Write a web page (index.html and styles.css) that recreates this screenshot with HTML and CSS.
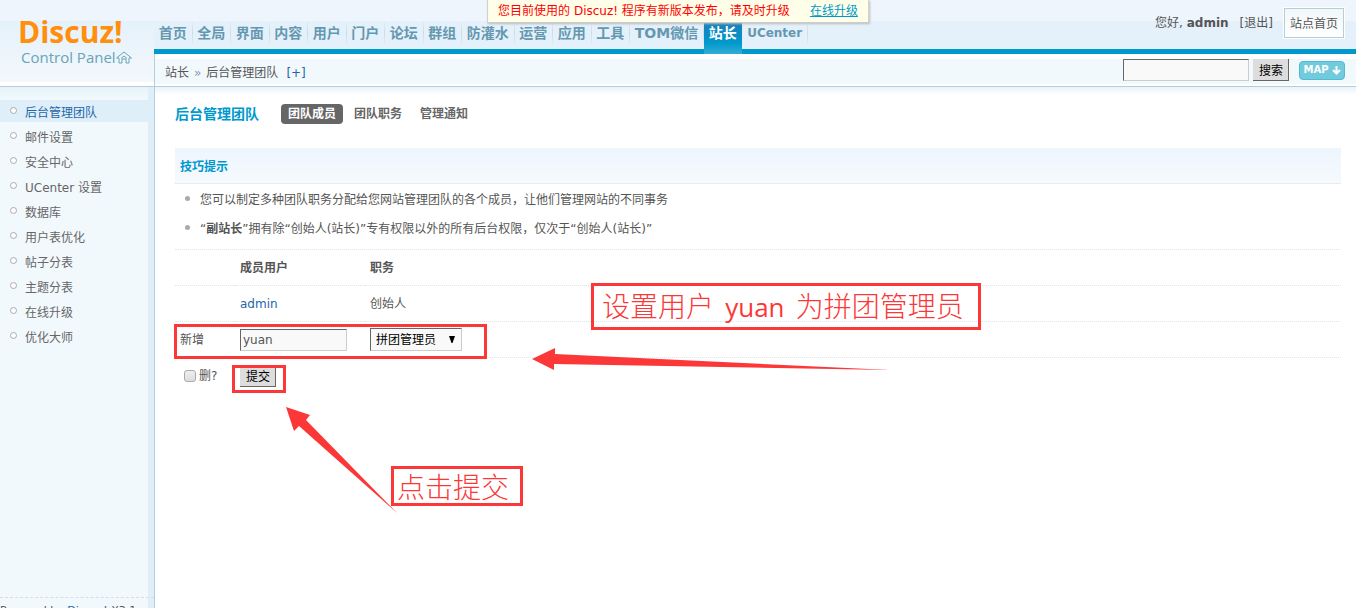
FILE: index.html
```html
<!DOCTYPE html>
<html lang="zh-CN">
<head>
<meta charset="utf-8">
<title>Discuz! Control Panel</title>
<link rel="stylesheet" href="styles.css">
</head>
<body>
<header class="header">
  <div class="brand">
    <div class="brand-name">Discuz!</div>
    <div class="brand-sub">Control Panel<svg class="home" width="16" height="13" viewBox="0 0 16 13" fill="none" stroke="#6ba3b8" stroke-width="1"><path d="M.5 7 8 1l7.500 6h-2.500v5h-3V8H6v4H3V7zM5 7.500 8 5l3 2.500"/></svg></div>
  </div>
  <div class="head-main">
    <div class="topbar">
      <nav class="nav">
        <a href="#">首页</a><a href="#">全局</a><a href="#">界面</a><a href="#">内容</a><a href="#">用户</a><a href="#">门户</a><a href="#">论坛</a><a href="#">群组</a><a href="#">防灌水</a><a href="#">运营</a><a href="#">应用</a><a href="#">工具</a><a href="#">TOM微信</a><a href="#" class="current">站长</a><a href="#" class="latin">UCenter</a>
      </nav>
      <div class="user">
        <span>您好, <strong>admin</strong></span>
        <a href="#">[退出]</a>
        <a href="#" class="site-home">站点首页</a>
      </div>
    </div>
    <div class="crumbs">
      <div class="path"><span>站长</span><span class="sep">»</span><span>后台管理团队</span><a href="#">[+]</a></div>
      <form class="search">
        <input class="field" type="text" aria-label="搜索">
        <button class="btn" type="button">搜索</button>
        <a href="#" class="map">MAP<svg width="9" height="9" viewBox="0 0 9 9" fill="none" stroke="#fff" stroke-width="2"><path d="M4.500 0v7M1 4l3.500 3.500L8 4"/></svg></a>
      </form>
    </div>
  </div>
</header>

<div class="body">
  <aside class="sidebar">
    <ul class="menu">
      <li class="active"><a href="#">后台管理团队</a></li>
      <li><a href="#">邮件设置</a></li>
      <li><a href="#">安全中心</a></li>
      <li><a href="#">UCenter 设置</a></li>
      <li><a href="#">数据库</a></li>
      <li><a href="#">用户表优化</a></li>
      <li><a href="#">帖子分表</a></li>
      <li><a href="#">主题分表</a></li>
      <li><a href="#">在线升级</a></li>
      <li><a href="#">优化大师</a></li>
    </ul>
    <div class="powered">Powered by <a href="#">Discuz!</a> X3.1</div>
  </aside>
  <main class="content">
    <div class="title-row">
      <h1>后台管理团队</h1>
      <div class="tabs"><a href="#" class="on">团队成员</a><a href="#">团队职务</a><a href="#">管理通知</a></div>
    </div>
    <h2 class="tips-title">技巧提示</h2>
    <ul class="tips">
      <li>您可以制定多种团队职务分配给您网站管理团队的各个成员，让他们管理网站的不同事务</li>
      <li><q><strong>副站长</strong></q>拥有除<q>创始人(站长)</q>专有权限以外的所有后台权限，仅次于<q>创始人(站长)</q></li>
    </ul>
    <table class="members">
      <thead><tr><th class="c-op"></th><th class="c-user">成员用户</th><th>职务</th></tr></thead>
      <tbody>
        <tr><td></td><td><a href="#">admin</a></td><td>创始人</td></tr>
        <tr><td>新增</td><td><input class="field name" type="text" value="yuan" aria-label="成员用户"></td>
          <td><span class="picker"><select aria-label="职务"><option>拼团管理员</option></select><svg width="6" height="7" viewBox="0 0 6 7"><path d="M0 0h6L3.500 7h-1z"/></svg></span></td></tr>
        <tr class="last"><td><label class="del"><input type="checkbox">删?</label></td><td colspan="2"><button class="btn" type="button">提交</button></td></tr>
      </tbody>
    </table>
  </main>
</div>

<div class="notice">您目前使用的 Discuz! 程序有新版本发布，请及时升级<a href="#">在线升级</a></div>

<div class="mark mark-row"></div>
<div class="mark mark-submit"></div>
<div class="mark note-user">设置用户 <span>yuan</span> 为拼团管理员</div>
<div class="mark note-submit">点击提交</div>
<svg class="arrows" width="660" height="170" viewBox="240 350 660 170" fill="#fc3737"><path d="M532 359 555 348v6L890 370 554 364v6zM286 407 310 415 306 420 397 513 299 426 294 431z"/></svg>
</body>
</html>
```

FILE: styles.css
```css
*, *::before { box-sizing: border-box; }
body {
  margin: 0;
  height: 100vh;
  overflow: hidden;
  display: flex;
  flex-direction: column;
  position: relative;
  background: #fff;
  color: #555;
  font: 12px/18px "DejaVu Sans", "Noto Sans CJK SC", sans-serif;
}
a { color: inherit; text-decoration: none; }
ul { list-style: none; margin: 0; padding: 0; }
h1, h2 { margin: 0; color: #09c; }
input, button, select { font: inherit; margin: 0; }

.header { display: flex; height: 87px; border-bottom: 1px solid #b5cfd9; flex: none; }
.brand {
  width: 154px;
  padding: 16px 0 0 18px;
  border-bottom: 4px solid #fff;
  background: linear-gradient(#eef5fc 21px, #e5f1fa 21px, #f3f8fd);
  font-family: "Open Sans", sans-serif;
}
.brand-name { color: #ff8f0c; font-size: 30px; font-weight: 700; line-height: 31px; }
.brand-sub { color: #6ba3b8; font-size: 15px; line-height: 20px; padding-left: 3px; display: flex; align-items: center; white-space: nowrap; }
.head-main { flex: 1; display: flex; flex-direction: column; }
.topbar {
  height: 54px;
  border-bottom: 5px solid #09c;
  background: linear-gradient(#eef5fc 21px, #e4f0fa 21px, #e4f0fa);
  display: flex;
  justify-content: space-between;
}
.nav { display: flex; width: 654px; height: 33px; margin-top: 21px; color: #6498b0; font-size: 14px; font-weight: 700; }
.nav a { flex: 1 0 auto; height: 24px; line-height: 24px; text-align: center; border-right: 1px solid; border-image: linear-gradient(#e4f0fa, #c8dce8, #e4f0fa) 1; }
.nav .current { height: 33px; color: #fff; border-right-color: transparent; border-image: none; background: linear-gradient(#1a7db8, #09c 22px, #33add6); }
.nav .latin { font-size: 12px; }
.user { display: flex; align-items: center; gap: 11px; height: 45px; padding-right: 12px; }
.user > span, .user > a { padding-top: 1px; }
.user .site-home { padding: 6px 5px 4px; line-height: 18px; border: 1px solid #b5cfd9; outline: 1px solid #fff; background: linear-gradient(#f2f7fa, #fff); }

.crumbs {
  flex: 1;
  display: flex;
  justify-content: space-between;
  align-items: center;
  padding: 0 11px 0 10px;
  border-left: 1px solid #b5cfd9;
  background: linear-gradient(#fff 5px, #f2f9fd 5px, #f2f9fd 30px, #fff 30px);
}
.path { display: flex; padding-top: 5px; }
.path .sep { margin: 0 5px; color: #889ab0; }
.path a { margin-left: 8px; color: #2366a8; }
.search { display: flex; align-items: center; gap: 4px; }
.field { width: 126px; height: 22px; padding: 2px; border: 1px solid; border-color: #666 #ccc #ccc #666; background: #f9f9f9; color: #555; }
.btn { height: 22px; padding: 2px 5px 0 6px; line-height: 18px; border: 0; border-right: 1px solid #666; border-bottom: 1px solid #666; background: #ddd; color: #000; }
.map { display: flex; align-items: center; justify-content: center; gap: 3px; width: 46px; height: 19px; margin-left: 6px; border: 1px solid #4fbbd4; border-radius: 4px; background: #72cadd; color: #fff; font-size: 10px; font-weight: 700; }

.body { flex: 1; display: flex; min-height: 0; }
.sidebar {
  width: 155px;
  flex: none;
  display: flex;
  flex-direction: column;
  justify-content: space-between;
  border-right: 1px solid #b5cfd9;
  background: linear-gradient(90deg, transparent 148px, #deeffa 148px), linear-gradient(#e6f3fa, #f2f9fd 13px);
}
.menu { padding-top: 13px; color: #666; }
.menu li { height: 22px; margin-bottom: 3px; line-height: 26px; padding-left: 10px; display: flex; gap: 8px; }
.menu li::before { content: ""; width: 7px; height: 7px; margin-top: 7px; border: 1px solid #aaa; border-radius: 50%; background: #fff; }
.menu .active { background: #deeffa; color: #2366a8; }
.powered { height: 11px; border-top: 1px dashed #d8dde2; padding-top: 4px; font-size: 11px; line-height: 18px; white-space: nowrap; }
.powered a { color: #2366a8; }

.content { flex: 1; padding: 17px 15px 0 20px; background: linear-gradient(#e8f3fc, #fff 8px); }
.title-row { display: flex; align-items: center; height: 20px; margin-bottom: 24px; }
h1 { font-size: 14px; line-height: 20px; }
.tabs { display: flex; gap: 4px; margin-left: 22px; color: #666; font-weight: 700; }
.tabs a { padding: 1px 7px 0; line-height: 19px; border-radius: 4px; }
.tips-title { height: 36px; padding: 1px 0 0 5px; font-size: 12px; line-height: 36px; border-bottom: 1px dotted #dbe6ee; background: linear-gradient(#edf5fd, #f6fafe); }
.tabs .on { background: #666; color: #fff; }
.tips { padding: 2px 0 5px 10px; border-bottom: 1px dotted #dbe6ee; }
.tips li { display: flex; line-height: 29px; }
.tips li::before { content: ""; width: 5px; height: 5px; margin: 10px 10px 0 0; border-radius: 50%; background: #aaa; }
q { quotes: "“" "”"; }
.members { width: 100%; border-collapse: separate; border-spacing: 0; table-layout: fixed; }
.members th, .members td { height: 36px; padding: 0 5px; text-align: left; border-bottom: 1px dotted #dbe6ee; }
.members .last td { border: 0; }
.members td a { color: #2366a8; }
.c-op { width: 60px; }
.c-user { width: 130px; }
.members .name { width: 107px; display: block; }
.picker { position: relative; display: inline-block; vertical-align: middle; }
.picker select { display: block; appearance: none; width: 92px; height: 23px; padding: 0 5px; border: 1px solid; border-color: #666 #ccc #ccc #666; border-radius: 0; background: #f9f9f9; color: #000; }
.picker svg { position: absolute; right: 7px; top: 8px; pointer-events: none; }
.del { display: flex; align-items: center; gap: 3px; padding-left: 4px; }
.del input { appearance: none; width: 12px; height: 12px; border: 1px solid #aaa; border-radius: 3px; background: linear-gradient(#eee, #ddd); }

.notice { position: absolute; top: 0; left: 50%; transform: translateX(-50%); height: 23px; padding: 1px 10px 0; line-height: 20px; white-space: nowrap; border: 1px solid #ccc; border-top: 0; background: #ffffe9; color: #f00; box-shadow: 1px 1px 2px #bbb; }
.notice a { margin-left: 20px; color: #09c; text-decoration: underline; }

.mark { position: absolute; border: 3px solid #fc3737; color: #fc3737; white-space: nowrap; }
.mark-row { left: 174px; top: 324px; width: 313px; height: 35px; }
.mark-submit { left: 232px; top: 365px; width: 54px; height: 28px; }
.note-user, .note-submit { font-family: "Noto Sans CJK SC", sans-serif; font-weight: 300; font-size: 28px; }
.note-user { left: 591px; top: 283px; width: 390px; height: 47px; padding-left: 8px; line-height: 38px; }
.note-user span { margin: 0 5px; font-family: "Open Sans", sans-serif; font-weight: 500; font-size: 26px; }
.note-submit { left: 391px; top: 466px; width: 132px; height: 40px; padding-left: 3px; line-height: 34px; }
.arrows { position: absolute; left: 240px; top: 350px; overflow: visible; }
```
